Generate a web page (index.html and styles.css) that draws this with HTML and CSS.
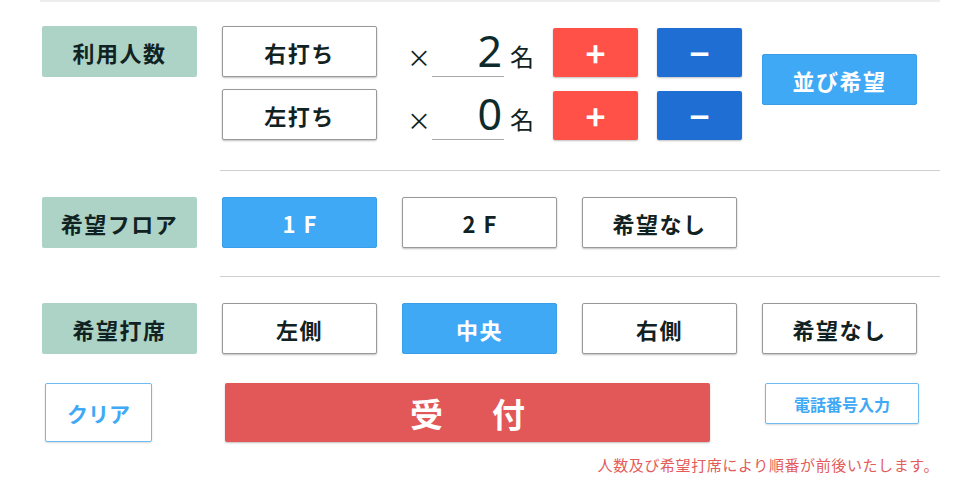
FILE: index.html
```html
<!DOCTYPE html>
<html lang="ja">
<head>
    <meta charset="UTF-8">
    <meta name="viewport" content="width=device-width, initial-scale=1.0">
    <title>受付</title>
    <link rel="stylesheet" href="styles.css">
</head>
<body>
    <div class="topline"></div>
    <div class="container">
        <!-- 利用人数 -->
        <div class="row">
            <div class="label">利用人数</div>
            <div class="count-list">
                <div class="count-row">
                    <button class="opt">右打ち</button>
                    <span class="times">×</span>
                    <span class="num">2</span>
                    <span class="unit">名</span>
                    <button class="plus">+</button>
                    <button class="minus">−</button>
                </div>
                <div class="count-row">
                    <button class="opt">左打ち</button>
                    <span class="times">×</span>
                    <span class="num">0</span>
                    <span class="unit">名</span>
                    <button class="plus">+</button>
                    <button class="minus">−</button>
                </div>
            </div>
            <button class="opt selected line-wish">並び希望</button>
        </div>
        <div class="divider first"></div>

        <!-- 希望フロア -->
        <div class="row">
            <div class="label">希望フロア</div>
            <button class="opt selected floor">1F</button>
            <button class="opt floor">2F</button>
            <button class="opt">希望なし</button>
        </div>
        <div class="divider"></div>

        <!-- 希望打席 -->
        <div class="row">
            <div class="label">希望打席</div>
            <button class="opt">左側</button>
            <button class="opt selected">中央</button>
            <button class="opt">右側</button>
            <button class="opt">希望なし</button>
        </div>

        <!-- 操作 -->
        <div class="actions">
            <button class="clear">クリア</button>
            <button class="submit">受　付</button>
            <button class="phone">電話番号入力</button>
        </div>
        <p class="note">人数及び希望打席により順番が前後いたします。</p>
    </div>
</body>
</html>
```

FILE: styles.css
```css
body {
    font-family: "Noto Sans CJK JP", "Noto Sans", sans-serif;
    background-color: white;
    color: #112222;
    margin: 0;
    padding: 0;
}

button {
    font-family: inherit;
    cursor: pointer;
    padding: 0;
}

.topline {
    margin-left: 40px;
    width: 900px;
    height: 2px;
    background-color: #ededed;
}

.container {
    margin-left: 42px;
    padding-top: 24px;
}

.row {
    display: flex;
    align-items: flex-start;
    gap: 25px;
}

.label {
    width: 155px;
    height: 51px;
    background-color: #acd3c6;
    border-radius: 2px;
    display: flex;
    align-items: center;
    justify-content: center;
    font-size: 22px;
    font-weight: bold;
    letter-spacing: 1.5px;
}

.opt {
    width: 155px;
    height: 51px;
    background-color: white;
    border: 1px solid #999;
    border-radius: 2px;
    box-shadow: 0 1px 2px rgba(0, 0, 0, 0.25);
    font-size: 22px;
    font-weight: bold;
    letter-spacing: 1.5px;
    color: #112222;
}

.opt.selected {
    background-color: #3fa9f5;
    border-color: #3a9fe8;
    color: white;
    box-shadow: none;
}

.opt.floor {
    letter-spacing: 8px;
    padding-left: 8px;
}

.count-list {
    display: flex;
    flex-direction: column;
    gap: 12px;
}

.count-row {
    display: flex;
    align-items: flex-end;
}

.times {
    width: 25px;
    padding-left: 30px;
    font-size: 24px;
    line-height: 40px;
}

.num {
    width: 72px;
    border-bottom: 1px solid #aaa;
    text-align: right;
    font-family: "Noto Sans", sans-serif;
    font-weight: 400;
    font-size: 43px;
    line-height: 50px;
    color: #0e2b2b;
    padding-right: 2px;
    box-sizing: border-box;
}

.unit {
    width: 43px;
    padding-left: 6px;
    font-size: 24px;
    line-height: 42px;
}

.plus, .minus {
    width: 85px;
    height: 49px;
    border: none;
    border-radius: 2px;
    color: white;
    font-size: 34px;
    font-weight: bold;
    line-height: 49px;
    box-shadow: 0 1px 2px rgba(0, 0, 0, 0.25);
}

.plus {
    background-color: #ff5147;
}

.minus {
    background-color: #1f6ed4;
    margin-left: 19px;
}

.line-wish {
    margin-left: -5px;
    margin-top: 28px;
}

.divider {
    margin: 28px 0 26px 178px;
    width: 720px;
    height: 1px;
    background-color: #cfcfcf;
}

.divider.first {
    margin-top: 30px;
}

.actions {
    display: flex;
    align-items: flex-start;
    margin-top: 29px;
    padding-left: 3px;
}

.clear {
    width: 107px;
    height: 59px;
    background-color: white;
    border: 1px solid #6cbcf3;
    border-radius: 2px;
    box-shadow: 0 1px 2px rgba(0, 0, 0, 0.15);
    color: #3fa9f5;
    font-size: 21px;
    font-weight: bold;
}

.submit {
    width: 485px;
    height: 59px;
    margin-left: 73px;
    background-color: #e25757;
    border: none;
    border-radius: 2px;
    box-shadow: 0 1px 2px rgba(0, 0, 0, 0.25);
    color: white;
    font-size: 33px;
    font-weight: bold;
    letter-spacing: 8px;
    padding-left: 8px;
}

.phone {
    width: 154px;
    height: 41px;
    margin-left: 55px;
    background-color: white;
    border: 1px solid #6cbcf3;
    border-radius: 2px;
    box-shadow: 0 1px 2px rgba(0, 0, 0, 0.15);
    color: #3fa9f5;
    font-size: 16px;
    font-weight: bold;
}

.note {
    width: 897px;
    margin: 12px 0 0;
    text-align: right;
    font-size: 15px;
    letter-spacing: 0.6px;
    color: #e35b5b;
}
```
